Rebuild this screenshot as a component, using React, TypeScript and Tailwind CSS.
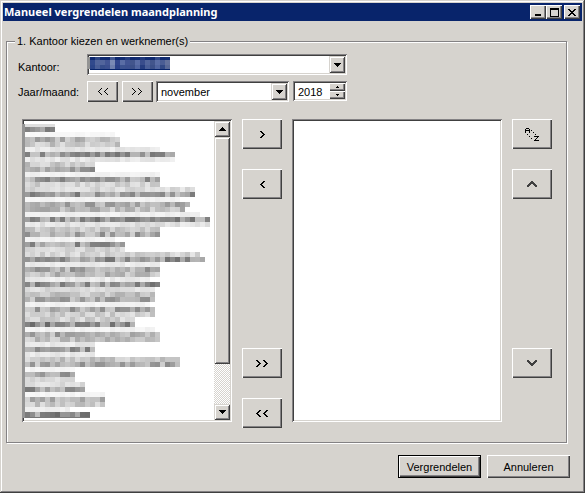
import React from 'react';
import clsx from 'clsx';

const raised =
  'bg-[#d6d3ce] shadow-[inset_1px_1px_#fff,inset_-1px_-1px_#404040,inset_-2px_-2px_#848284]';
const raisedSoft =
  'bg-[#d6d3ce] shadow-[inset_1px_1px_#d6d3ce,inset_-1px_-1px_#404040,inset_2px_2px_#fff,inset_-2px_-2px_#848284]';
const sunken =
  'bg-white shadow-[inset_1px_1px_#848284,inset_-1px_-1px_#fff,inset_2px_2px_#404040,inset_-2px_-2px_#d6d3ce]';

// [number of cells, average darkness in %] for each line of the masked names
const maskedRows: [number, number][] = [
  [6, 42], [18, 3], [19, 30], [19, 22], [27, 9], [30, 40], [30, 10], [14, 22], [14, 35], [27, 5],
  [27, 36], [27, 18], [34, 15], [34, 40], [31, 5], [33, 32], [32, 26], [35, 6], [37, 40], [37, 12],
  [27, 22], [27, 34], [18, 5], [20, 38], [20, 17], [35, 17], [36, 40], [27, 8], [27, 33], [27, 27],
  [25, 8], [27, 40], [26, 14], [26, 23], [26, 33], [25, 5], [26, 33], [26, 19], [22, 18], [22, 42],
  [26, 5], [27, 32], [27, 24], [14, 9], [14, 38], [14, 9], [31, 22], [31, 33], [10, 4], [10, 34],
  [10, 14], [12, 14], [12, 40], [16, 4], [16, 30], [16, 21], [9, 7], [13, 42],
];

const noise = (a: number, b: number) => {
  const n = Math.sin(a * 12.9898 + b * 78.233) * 43758.5453;
  return n - Math.floor(n);
};

const grey = (darkness: number) => {
  const v = Math.round(255 * (1 - darkness / 100));
  return `rgb(${v},${v},${v})`;
};

const MaskedNames: React.FC = () => (
  <svg width="192" height="294" shapeRendering="crispEdges" role="img" aria-label="Werknemers">
    <rect width="3" height="294" fill="#949494" />
    <rect x="3" width="30" height="3" fill="#dedede" />
    {maskedRows.map(([cells, darkness], row) =>
      Array.from({ length: cells }, (_, col) => (
        <rect
          key={`${row}-${col}`}
          x={3 + col * 5}
          y={3 + row * 5}
          width="5"
          height="5"
          fill={grey(darkness * (0.55 + 0.85 * noise(col + 1, row + 1)))}
        />
      ))
    )}
    <rect x="3" y="293" width="65" height="1" fill="#777" />
  </svg>
);

const officeShades = [
  '#31498c', '#52659c', '#52659c', '#425594', '#7b8ab5', '#31458c', '#5a6da5', '#425594',
  '#42558c', '#5a6da5', '#394d8c', '#52659c', '#42558c', '#5a6da5', '#4a5d94', '#63719c',
];

const MaskedOffice: React.FC = () => (
  <svg width="83" height="13" shapeRendering="crispEdges" aria-hidden="true">
    <rect width="3" height="12" fill="#949494" />
    <rect x="3" width="80" height="13" fill="#08246b" />
    {officeShades.map((fill, i) => (
      <g key={i} fill={fill}>
        <rect x={3 + i * 5} y="0" width="5" height="3" opacity={i % 3 === 1 ? 0.5 : 0.12} />
        <rect x={3 + i * 5} y="3" width="5" height="5" />
        <rect x={3 + i * 5} y="8" width="5" height="4" opacity={i % 4 === 2 ? 0.65 : 0.9} />
      </g>
    ))}
  </svg>
);

const Triangle: React.FC<{ up?: boolean; small?: boolean }> = ({ up, small }) => (
  <svg
    width={small ? 3 : 7}
    height={small ? 2 : 4}
    viewBox={small ? '2 2 3 2' : '0 0 7 4'}
    shapeRendering="crispEdges"
    className={clsx('shrink-0', up && 'rotate-180')}
    aria-hidden="true"
  >
    <path d="M0 0h7v1H0zM1 1h5v1H1zM2 2h3v1H2zM3 3h1v1H3z" />
  </svg>
);

// Single and double arrow heads, 5 pixels wide and 7 pixels high
const Chevrons: React.FC<{ left?: boolean; double?: boolean; thin?: boolean }> = ({ left, double, thin }) => {
  const d = thin
    ? 'M0 0h1v1h-1zM1 1h1v1h-1zM2 2h1v1h-1zM3 3h1v1h-1zM2 4h1v1h-1zM1 5h1v1h-1zM0 6h1v1h-1z'
    : 'M0 0h2v1h-2zM1 1h2v1h-2zM2 2h2v1h-2zM3 3h2v1h-2zM2 4h2v1h-2zM1 5h2v1h-2zM0 6h2v1h-2z';
  const step = thin ? 6 : 7;
  return (
    <svg
      width={double ? step + 5 : 5}
      height="7"
      shapeRendering="crispEdges"
      className={clsx(left && '-scale-x-100')}
      aria-hidden="true"
    >
      <path d={d} />
      {double && <path d={d} transform={`translate(${step} 0)`} />}
    </svg>
  );
};

const MoveArrow: React.FC<{ down?: boolean }> = ({ down }) => (
  <svg
    width="10"
    height="6"
    fill="#404040"
    shapeRendering="crispEdges"
    className={clsx(down && 'rotate-180')}
    aria-hidden="true"
  >
    <path d="M4 0h2v1H4zM3 1h4v1H3zM2 2h6v1H2zM1 3h3v1H1zM6 3h3v1H6zM0 4h3v1H0zM7 4h3v1H7zM0 5h2v1H0zM8 5h2v1H8z" />
  </svg>
);

const SortIcon: React.FC = () => (
  <svg width="14" height="13" fill="none" stroke="#000" shapeRendering="crispEdges" aria-hidden="true">
    <path d="M1 .5h3M.5 1v4M4.5 1v4M1 2.5h3M9 8.5h5M12 9.5h1M11 10.5h1M10 11.5h1M9 12.5h5" />
    <path d="M6 2.5h1M8 4.5h1M10 6.5h1M2 6.5h1M4 8.5h1M6 10.5h1" />
  </svg>
);

interface BevelButtonProps {
  label: string;
  className: string;
  children: React.ReactNode;
}

const BevelButton: React.FC<BevelButtonProps> = ({ label, className, children }) => (
  <button
    type="button"
    aria-label={label}
    className={clsx('flex shrink-0 items-center justify-center', raised, className)}
  >
    {children}
  </button>
);

const DropArrow: React.FC = () => (
  <span
    className={clsx(
      'pointer-events-none absolute inset-y-[2px] right-[2px] flex w-4 items-center justify-center',
      raisedSoft
    )}
  >
    <Triangle />
  </span>
);

const App: React.FC = () => {
  return (
    <main className="w-full bg-[#d6d3ce] p-[3px] font-['Liberation_Sans',Arial,sans-serif] text-[11px] leading-4 text-black shadow-[inset_-1px_-1px_#404040,inset_1px_1px_#d6d3ce,inset_-2px_-2px_#848284,inset_2px_2px_#fff]">
      <header className="flex h-[18px] items-center bg-[#08246b] pl-px pr-[2px]">
        <h1 className="flex-1 whitespace-nowrap font-['Noto_Sans','Open_Sans',sans-serif] text-[11px] font-bold text-white">
          Manueel vergrendelen maandplanning
        </h1>
        <BevelButton label="Minimaliseren" className="h-[14px] w-4">
          <svg width="8" height="8" shapeRendering="crispEdges" aria-hidden="true">
            <path d="M1 6h6v2H1z" />
          </svg>
        </BevelButton>
        <BevelButton label="Maximaliseren" className="h-[14px] w-4">
          <svg width="9" height="9" shapeRendering="crispEdges" aria-hidden="true">
            <path fillRule="evenodd" d="M0 0h9v9H0zM1 2v6h7V2z" />
          </svg>
        </BevelButton>
        <BevelButton label="Sluiten" className="ml-[2px] h-[14px] w-4">
          <svg width="8" height="7" shapeRendering="crispEdges" aria-hidden="true">
            <path d="M0 0h2v1H0zM6 0h2v1H6zM1 1h2v1H1zM5 1h2v1H5zM2 2h4v1H2zM3 3h2v1H3zM2 4h4v1H2zM1 5h2v1H1zM5 5h2v1H5zM0 6h2v1H0zM6 6h2v1H6z" />
          </svg>
        </BevelButton>
      </header>

      <form onSubmit={(e) => e.preventDefault()}>
        <fieldset className="ml-[3px] mr-[15px] mt-3 border border-[#848284] pb-[14px] pl-2 pr-[14px] shadow-[1px_1px_#fff,inset_1px_1px_#fff]">
          <legend className="bg-[#d6d3ce] px-[2px]">1. Kantoor kiezen en werknemer(s)</legend>

          <div className="flex flex-col gap-[6px] pl-[3px] pt-[5px]">
            <div className="flex h-[21px]">
              <label htmlFor="office" className="w-[69px] pt-[5px]">
                Kantoor:
              </label>
              <div className={clsx('relative w-[260px]', sunken)}>
                <select id="office" className="block h-full w-full appearance-none bg-transparent px-1 outline-none">
                  <option aria-label="Kantoor" />
                </select>
                <span className="pointer-events-none absolute left-0 top-[3px]">
                  <MaskedOffice />
                </span>
                <DropArrow />
              </div>
            </div>

            <div className="flex h-[21px]">
              <label htmlFor="month" className="w-[69px] pt-[3px]">
                Jaar/maand:
              </label>
              <BevelButton label="Vorige maand" className="w-[31px]">
                <Chevrons left double thin />
              </BevelButton>
              <BevelButton label="Volgende maand" className="ml-1 w-[31px]">
                <Chevrons double thin />
              </BevelButton>
              <div className={clsx('relative ml-[3px] w-[133px]', sunken)}>
                <select
                  id="month"
                  defaultValue="november"
                  className="block h-full w-full appearance-none bg-transparent pl-[5px] pr-5 outline-none"
                >
                  <option>oktober</option>
                  <option>november</option>
                  <option>december</option>
                </select>
                <DropArrow />
              </div>
              <div className={clsx('ml-1 flex h-5 w-[54px] p-[2px]', sunken)}>
                <input
                  aria-label="Jaar"
                  inputMode="numeric"
                  defaultValue="2018"
                  className="w-0 flex-1 bg-transparent pl-[3px] pt-px outline-none"
                />
                <div className="flex w-4 flex-col">
                  <BevelButton label="Jaar omhoog" className="h-2 w-4">
                    <Triangle up small />
                  </BevelButton>
                  <BevelButton label="Jaar omlaag" className="h-2 w-4">
                    <Triangle small />
                  </BevelButton>
                </div>
              </div>
            </div>
          </div>

          <div className="mt-[17px] flex items-start gap-[10px] pl-[7px]">
            <div
              role="listbox"
              aria-label="Beschikbare werknemers"
              className={clsx('flex h-[303px] min-w-0 flex-1 py-[2px] pr-[2px]', sunken)}
            >
              <div className="min-w-0 flex-1 overflow-hidden pt-[3px]">
                <MaskedNames />
              </div>
              <div className="flex w-4 flex-col bg-[conic-gradient(#fff_25%,#d6d3ce_0_50%,#fff_0_75%,#d6d3ce_0)] bg-[length:2px_2px]">
                <button
                  type="button"
                  aria-label="Omhoog schuiven"
                  className={clsx('flex h-4 items-center justify-center', raisedSoft)}
                >
                  <Triangle up />
                </button>
                <div className="flex-1">
                  <div className={clsx('h-[85%]', raisedSoft)} />
                </div>
                <button
                  type="button"
                  aria-label="Omlaag schuiven"
                  className={clsx('flex h-4 items-center justify-center', raisedSoft)}
                >
                  <Triangle />
                </button>
              </div>
            </div>

            <div className="flex flex-col gap-[149px]">
              <div className="flex flex-col gap-5">
                <BevelButton label="Toevoegen" className="h-[30px] w-10">
                  <Chevrons />
                </BevelButton>
                <BevelButton label="Verwijderen" className="h-[30px] w-10">
                  <Chevrons left />
                </BevelButton>
              </div>
              <div className="flex flex-col gap-5">
                <BevelButton label="Alles toevoegen" className="h-[30px] w-10">
                  <Chevrons double />
                </BevelButton>
                <BevelButton label="Alles verwijderen" className="h-[30px] w-10">
                  <Chevrons left double />
                </BevelButton>
              </div>
            </div>

            <select
              multiple
              aria-label="Gekozen werknemers"
              className={clsx('h-[303px] min-w-0 flex-1 appearance-none py-[2px] pr-[2px] outline-none', sunken)}
            />

            <div className="flex flex-col gap-[149px]">
              <div className="flex flex-col gap-5">
                <BevelButton label="Sorteren" className="h-[30px] w-10">
                  <SortIcon />
                </BevelButton>
                <BevelButton label="Omhoog" className="h-[30px] w-10">
                  <MoveArrow />
                </BevelButton>
              </div>
              <BevelButton label="Omlaag" className="h-[30px] w-10">
                <MoveArrow down />
              </BevelButton>
            </div>
          </div>
        </fieldset>

        <div className="mb-3 mr-3 mt-3 flex justify-end gap-[6px]">
          <button
            type="submit"
            className="h-[23px] w-[83px] border border-black bg-[#d6d3ce] shadow-[inset_1px_1px_#fff,inset_-1px_-1px_#404040,inset_-2px_-2px_#848284]"
          >
            Vergrendelen
          </button>
          <button type="button" className={clsx('h-[23px] w-[83px]', raised)}>
            Annuleren
          </button>
        </div>
      </form>
    </main>
  );
};

export default App;
